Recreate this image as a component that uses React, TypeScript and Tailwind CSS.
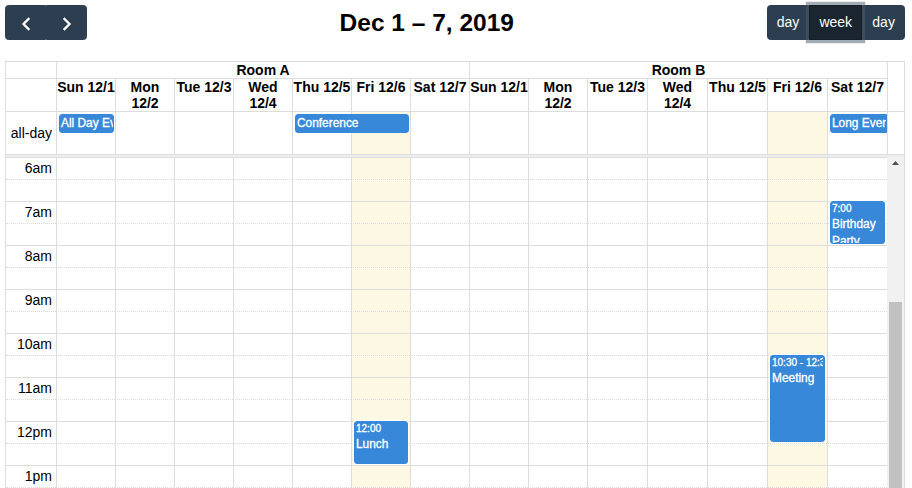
import React from "react";

const COLS = "grid-cols-[50px_repeat(9,59px)_repeat(5,60px)_17px]";
const BODY_COLS = "grid-cols-[50px_repeat(9,59px)_repeat(5,60px)]";
const COL_START = [
  "col-start-1",
  "col-start-2",
  "col-start-3",
  "col-start-4",
  "col-start-5",
  "col-start-6",
  "col-start-7",
  "col-start-8",
  "col-start-9",
  "col-start-10",
  "col-start-11",
  "col-start-12",
  "col-start-13",
  "col-start-14",
  "col-start-15",
  "col-start-16",
];

const days = ["Sun 12/1", "Mon 12/2", "Tue 12/3", "Wed 12/4", "Thu 12/5", "Fri 12/6", "Sat 12/7"];
const allDays = [...days, ...days];
const hours = ["6am", "7am", "8am", "9am", "10am", "11am", "12pm", "1pm", "2pm"];
const slots = Array.from({ length: 16 }, (_, i) => i);

const EV_TEXT = "[-webkit-text-stroke:0.3px_white]";

function Chevron({ dir }: { dir: "left" | "right" }) {
  return (
    <svg width="12" height="14" viewBox="0 0 12 14" className="mt-[2px]">
      <path
        d={dir === "left" ? "M8.5 2 L3.5 7 L8.5 12" : "M3.5 2 L8.5 7 L3.5 12"}
        fill="none"
        stroke="white"
        strokeWidth="2.3"
        strokeLinecap="square"
      />
    </svg>
  );
}

export default function App() {
  return (
    <div className="h-[488px] w-[912px] overflow-hidden bg-white pt-[5px] pl-[5px] pr-[7px] font-['Liberation_Sans',Arial,sans-serif] text-[14px] text-black">
      {/* Toolbar */}
      <div className="mb-[21px] flex h-[35px] items-center justify-between">
        <div className="flex">
          <button className="flex h-[35px] w-[41px] items-center justify-center rounded-l-[3.5px] border border-[#2c3e50] bg-[#2c3e50]">
            <Chevron dir="left" />
          </button>
          <button className="flex h-[35px] w-[41px] items-center justify-center rounded-r-[3.5px] border border-[#2c3e50] bg-[#2c3e50]">
            <Chevron dir="right" />
          </button>
        </div>
        <h2 className="text-[24.5px] font-bold leading-[1.2]">Dec 1 – 7, 2019</h2>
        <div className="flex">
          <button className="h-[35px] rounded-l-[3.5px] border border-[#2c3e50] bg-[#2c3e50] px-[9.1px] text-[14px] leading-[21px] text-white">
            day
          </button>
          <button className="relative z-10 h-[35px] border border-[#151e27] bg-[#1a252f] px-[9.1px] text-[14px] leading-[21px] text-white shadow-[0_0_0_3.2px_rgba(76,91,106,0.5)]">
            week
          </button>
          <button className="h-[35px] rounded-r-[3.5px] border border-[#2c3e50] bg-[#2c3e50] px-[9.1px] text-[14px] leading-[21px] text-white">
            day
          </button>
        </div>
      </div>

      {/* Calendar table */}
      <div className="w-[900px] border border-[#ddd]">
        {/* Header */}
        <div className={`grid ${COLS}`}>
          <div />
          <div className="col-span-7 border-l border-[#ddd] text-center font-bold leading-[16px]">Room A</div>
          <div className="col-span-7 border-l border-[#ddd] text-center font-bold leading-[16px]">Room B</div>
          <div className="row-span-2 border-l border-[#ddd]" />
          <div className="border-t border-[#ddd]" />
          {allDays.map((d, i) => (
            <div key={i} className="border-t border-l border-[#ddd] text-center font-bold leading-[16px]">
              {d}
            </div>
          ))}
        </div>

        {/* All-day row */}
        <div className={`grid ${COLS} border-t border-[#ddd]`}>
          <div className="col-start-1 row-start-1 flex h-[42px] items-center justify-end pr-[4px] leading-[20px]">
            all-day
          </div>
          {allDays.map((d, i) => (
            <div
              key={i}
              className={`${COL_START[i + 1]} row-start-1 border-l border-[#ddd] ${i % 7 === 5 ? "bg-[#fcf8e3]" : ""}`}
            />
          ))}
          <div className="col-start-16 row-start-1 border-l border-[#ddd]" />
          <div className={`col-start-2 row-start-1 mt-[2px] mr-[1px] ml-[3px] min-w-0 self-start overflow-hidden whitespace-nowrap rounded-[3px] border border-[#3788d8] bg-[#3788d8] px-[1px] text-[11.9px] leading-[1.4] text-white ${EV_TEXT}`}>
            All Day Event
          </div>
          <div className={`col-span-2 col-start-6 row-start-1 mt-[2px] mr-[1px] ml-[3px] min-w-0 self-start overflow-hidden whitespace-nowrap rounded-[3px] border border-[#3788d8] bg-[#3788d8] px-[1px] text-[11.9px] leading-[1.4] text-white ${EV_TEXT}`}>
            Conference
          </div>
          <div className={`col-start-15 row-start-1 mt-[2px] ml-[3px] min-w-0 self-start overflow-hidden whitespace-nowrap rounded-l-[3px] border border-[#3788d8] bg-[#3788d8] px-[1px] text-[11.9px] leading-[1.4] text-white ${EV_TEXT}`}>
            Long Event
          </div>
        </div>

        {/* Divider */}
        <div className="h-[3px] border-t border-[#ddd] bg-[#eee]" />

        {/* Time grid body */}
        <div className="flex h-[340px] overflow-hidden">
          <div className="relative w-[881px] shrink-0">
            {slots.map((s) => {
              const minor = s % 2 === 1;
              const line = minor ? "border-dotted" : "border-solid";
              return (
                <div key={s} className={`grid ${BODY_COLS} h-[22px]`}>
                  <div className={`border-t border-[#ddd] ${line} pr-[4px] text-right leading-[21px]`}>
                    {minor ? "" : hours[s / 2]}
                  </div>
                  {allDays.map((d, i) => (
                    <div
                      key={i}
                      className={`border-t border-l border-[#ddd] ${line} ${i % 7 === 5 ? "bg-[#fcf8e3]" : ""}`}
                      style={{ borderLeftStyle: "solid" }}
                    />
                  ))}
                </div>
              );
            })}

            {/* Events overlay */}
            <div className={`absolute inset-0 grid ${BODY_COLS}`}>
              <div className="relative col-start-7 row-start-1">
                <div className={`absolute top-[264px] right-[2px] left-[3px] h-[43px] overflow-hidden rounded-[3px] border border-[#3788d8] bg-[#3788d8] px-[1px] text-white shadow-[0_0_0_1px_#fff] ${EV_TEXT}`}>
                  <div className="overflow-hidden whitespace-nowrap text-[10px] leading-[1.4]">12:00</div>
                  <div className="text-[11.9px] leading-[1.4]">Lunch</div>
                </div>
              </div>
              <div className="relative col-start-14 row-start-1">
                <div className={`absolute top-[198px] right-[2px] left-[3px] h-[87px] overflow-hidden rounded-[3px] border border-[#3788d8] bg-[#3788d8] px-[1px] text-white shadow-[0_0_0_1px_#fff] ${EV_TEXT}`}>
                  <div className="overflow-hidden whitespace-nowrap text-[10px] leading-[1.4]">10:30 - 12:30</div>
                  <div className="text-[11.9px] leading-[1.4]">Meeting</div>
                </div>
              </div>
              <div className="relative col-start-15 row-start-1">
                <div className={`absolute top-[44px] right-[2px] left-[3px] h-[43px] overflow-hidden rounded-[3px] border border-[#3788d8] bg-[#3788d8] px-[1px] text-white shadow-[0_0_0_1px_#fff] ${EV_TEXT}`}>
                  <div className="overflow-hidden whitespace-nowrap text-[10px] leading-[1.4]">7:00</div>
                  <div className="text-[11.9px] leading-[1.4]">Birthday Party</div>
                </div>
              </div>
            </div>
          </div>

          {/* Fake scrollbar */}
          <div className="flex w-[17px] shrink-0 flex-col bg-[#f1f1f1]">
            <div className="flex h-[17px] items-center justify-center">
              <svg width="7" height="4" viewBox="0 0 7 4" className="mt-[1px]">
                <path d="M3.5 0 L7 4 L0 4 Z" fill="#505050" />
              </svg>
            </div>
            <div className="mt-[134px] ml-[2px] h-[300px] w-[13px] bg-[#c1c1c1]" />
          </div>
        </div>
      </div>
    </div>
  );
}
